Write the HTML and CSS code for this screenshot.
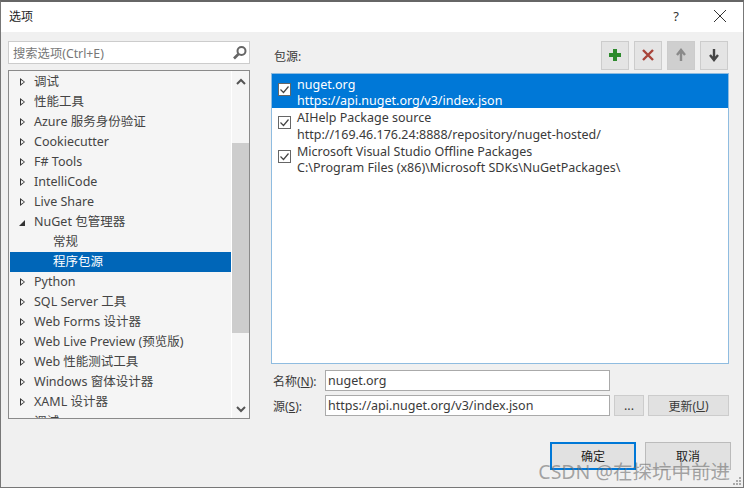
FILE: index.html
```html
<!DOCTYPE html>
<html lang="zh-CN">
<head>
    <meta charset="UTF-8">
    <title>选项</title>
    <link rel="stylesheet" href="styles.css">
</head>
<body>
    <div class="dialog">
        <header class="titlebar">
            <span class="title">选项</span>
            <span class="help">?</span>
            <svg class="close" width="14" height="14" viewBox="0 0 14 14"><path d="M1 1 13 13M13 1 1 13" stroke="#333" stroke-width="1" fill="none"/></svg>
        </header>

        <div class="content">
            <div class="left">
                <div class="search">
                    <span class="search-text">搜索选项(Ctrl+E)</span>
                    <svg width="16" height="16" viewBox="0 0 16 16"><circle cx="9.5" cy="6" r="4" fill="none" stroke="#666" stroke-width="2"/><path d="M6.5 9 2 13.5" stroke="#666" stroke-width="2.6"/></svg>
                </div>
                <div class="tree">
                    <div class="tree-items">
                        <div class="node"><i class="arrow"></i>调试</div>
                        <div class="node"><i class="arrow"></i>性能工具</div>
                        <div class="node"><i class="arrow"></i>Azure 服务身份验证</div>
                        <div class="node"><i class="arrow"></i>Cookiecutter</div>
                        <div class="node"><i class="arrow"></i>F# Tools</div>
                        <div class="node"><i class="arrow"></i>IntelliCode</div>
                        <div class="node"><i class="arrow"></i>Live Share</div>
                        <div class="node"><i class="arrow open"></i>NuGet 包管理器</div>
                        <div class="node child">常规</div>
                        <div class="node child selected">程序包源</div>
                        <div class="node"><i class="arrow"></i>Python</div>
                        <div class="node"><i class="arrow"></i>SQL Server 工具</div>
                        <div class="node"><i class="arrow"></i>Web Forms 设计器</div>
                        <div class="node"><i class="arrow"></i>Web Live Preview (预览版)</div>
                        <div class="node"><i class="arrow"></i>Web 性能测试工具</div>
                        <div class="node"><i class="arrow"></i>Windows 窗体设计器</div>
                        <div class="node"><i class="arrow"></i>XAML 设计器</div>
                        <div class="node"><i class="arrow"></i>调试</div>
                    </div>
                    <div class="scrollbar">
                        <svg width="10" height="8" viewBox="0 0 10 8"><path d="M1 6 5 2 9 6" fill="none" stroke="#555" stroke-width="2"/></svg>
                        <div class="track"><div class="thumb"></div></div>
                        <svg width="10" height="8" viewBox="0 0 10 8"><path d="M1 2 5 6 9 2" fill="none" stroke="#555" stroke-width="2"/></svg>
                    </div>
                </div>
            </div>

            <div class="right">
                <div class="top-row">
                    <span class="sources-label">包源:</span>
                    <div class="tools">
                        <div class="tool"><svg width="14" height="14" viewBox="0 0 14 14"><path d="M7 1V13M1 7H13" stroke="#2d8a2d" stroke-width="4"/></svg></div>
                        <div class="tool"><svg width="14" height="14" viewBox="0 0 14 14"><path d="M2 2 12 12M12 2 2 12" stroke="#a8443a" stroke-width="2.4"/></svg></div>
                        <div class="tool off"><svg width="12" height="14" viewBox="0 0 12 14"><path d="M6 13V3M2 7 6 2 10 7" fill="none" stroke="#8a8a8a" stroke-width="2.4"/></svg></div>
                        <div class="tool"><svg width="12" height="14" viewBox="0 0 12 14"><path d="M6 1V11M2 7 6 12 10 7" fill="none" stroke="#444" stroke-width="2.4"/></svg></div>
                    </div>
                </div>
                <div class="sources">
                    <div class="source active">
                        <span class="check"><svg width="11" height="11" viewBox="0 0 11 11"><path d="M1.5 5.5 4.5 8.5 9.5 2.5" fill="none" stroke="#444" stroke-width="1.2"/></svg></span>
                        <div class="source-text">nuget.org<br>https://api.nuget.org/v3/index.json</div>
                    </div>
                    <div class="source">
                        <span class="check"><svg width="11" height="11" viewBox="0 0 11 11"><path d="M1.5 5.5 4.5 8.5 9.5 2.5" fill="none" stroke="#444" stroke-width="1.2"/></svg></span>
                        <div class="source-text">AIHelp Package source<br>http://169.46.176.24:8888/repository/nuget-hosted/</div>
                    </div>
                    <div class="source">
                        <span class="check"><svg width="11" height="11" viewBox="0 0 11 11"><path d="M1.5 5.5 4.5 8.5 9.5 2.5" fill="none" stroke="#444" stroke-width="1.2"/></svg></span>
                        <div class="source-text">Microsoft Visual Studio Offline Packages<br>C:\Program Files (x86)\Microsoft SDKs\NuGetPackages\</div>
                    </div>
                </div>
                <div class="form-row name-row">
                    <label>名称(<u>N</u>):</label>
                    <div class="field">nuget.org</div>
                </div>
                <div class="form-row">
                    <label>源(<u>S</u>):</label>
                    <div class="field">https://api.nuget.org/v3/index.json</div>
                    <div class="btn browse">...</div>
                    <div class="btn update">更新(<u>U</u>)</div>
                </div>
            </div>
        </div>

        <footer class="actions">
            <div class="btn action primary">确定</div>
            <div class="btn action">取消</div>
        </footer>
        <span class="watermark">CSDN @在探坑中前进</span>
        <svg class="grip" width="9" height="9" viewBox="0 0 9 9" fill="#aaa"><rect x="6" y="0" width="2" height="2"/><rect x="3" y="3" width="2" height="2"/><rect x="6" y="3" width="2" height="2"/><rect x="0" y="6" width="2" height="2"/><rect x="3" y="6" width="2" height="2"/><rect x="6" y="6" width="2" height="2"/></svg>
    </div>
</body>
</html>
```

FILE: styles.css
```css
html, body {
    margin: 0;
    padding: 0;
}

body {
    width: 744px;
    height: 489px;
    overflow: hidden;
    font-family: "Noto Sans", "Noto Sans CJK SC", sans-serif;
    font-size: 12.5px;
    color: #3a3a3a;
}

.dialog {
    position: relative;
    box-sizing: border-box;
    width: 744px;
    height: 488px;
    border: 1px solid #777;
    border-top: 2px solid #666;
    background-color: #f0f0f0;
    display: flex;
    flex-direction: column;
}

.titlebar {
    box-sizing: border-box;
    height: 30px;
    flex: none;
    background-color: #fff;
    display: flex;
    align-items: center;
    padding: 0 16px 2px 8px;
}

.title {
    flex: 1;
    font-size: 12px;
    color: #222;
}

.help {
    font-size: 13px;
    margin-right: 34px;
    color: #333;
}

.content {
    flex: none;
    height: 386px;
    display: flex;
    padding: 9px 14px 0 7px;
    gap: 21px;
}

.left {
    width: 242px;
    flex: none;
}

.search {
    box-sizing: border-box;
    height: 23px;
    background-color: #fff;
    border: 1px solid #ccc;
    display: flex;
    align-items: center;
    justify-content: space-between;
    padding: 0 1px 0 4px;
    color: #777;
    font-size: 12.3px;
}

.tree {
    box-sizing: border-box;
    height: 349px;
    margin-top: 6px;
    border: 1px solid #8a8a8a;
    background-color: #f5f5f5;
    display: flex;
    overflow: hidden;
    padding-left: 1px;
}

.tree-items {
    width: 221px;
    flex: none;
    padding-top: 1px;
}

.node {
    height: 20px;
    line-height: 20px;
    white-space: nowrap;
    padding-left: 24px;
    position: relative;
    font-size: 12.5px;
    color: #444;
}

.node.child {
    padding-left: 43px;
}

.node.selected {
    background-color: #0066b8;
    color: #fff;
}

.arrow {
    position: absolute;
    left: 10px;
    top: 6px;
    width: 0;
    height: 0;
    border-left: 5px solid #333;
    border-top: 4px solid transparent;
    border-bottom: 4px solid transparent;
}

.arrow::after {
    content: "";
    position: absolute;
    left: -4px;
    top: -2px;
    border-left: 3px solid #f5f5f5;
    border-top: 2px solid transparent;
    border-bottom: 2px solid transparent;
}

.arrow.open {
    left: 9px;
    top: 8px;
    border: none;
    border-right: 6px solid #333;
    border-top: 6px solid transparent;
}

.arrow.open::after {
    display: none;
}

.scrollbar {
    flex: 1;
    display: flex;
    flex-direction: column;
    align-items: center;
    justify-content: space-between;
    padding: 7px 0 5px;
    border-left: 1px solid #fff;
}

.track {
    flex: 1;
    width: 100%;
    padding-top: 57px;
    padding-bottom: 72px;
    box-sizing: border-box;
    display: flex;
}

.thumb {
    flex: 1;
    background-color: #cdcdcd;
}

.right {
    flex: 1;
    min-width: 0;
}

.top-row {
    height: 32px;
    display: flex;
    align-items: center;
    justify-content: space-between;
}

.sources-label {
    margin-left: 3px;
    font-size: 12px;
    margin-top: -3px;
}

.tools {
    display: flex;
    gap: 5px;
    margin: -4px 1px 0 0;
}

.tool {
    box-sizing: border-box;
    width: 28px;
    height: 29px;
    border: 1px solid #ccc;
    background-color: #e4e4e4;
    display: flex;
    align-items: center;
    justify-content: center;
}

.tool.off {
    background-color: #cfcfcf;
}

.sources {
    box-sizing: border-box;
    height: 291px;
    border: 1px solid #8fbce0;
    background-color: #fff;
}

.source {
    display: flex;
    align-items: center;
    height: 33.5px;
    padding-left: 6px;
    gap: 6px;
}

.source.active {
    height: 34px;
    background-color: #0078d7;
    color: #fff;
}

.source-text {
    line-height: 16.5px;
    font-size: 12.5px;
    white-space: nowrap;
    padding-top: 4px;
}

.check {
    box-sizing: border-box;
    width: 13px;
    height: 13px;
    margin-bottom: 4px;
    border: 1px solid #666;
    background-color: #fff;
    display: flex;
    align-items: center;
    justify-content: center;
    flex: none;
}

.form-row {
    display: flex;
    align-items: center;
    height: 21px;
    margin-top: 4px;
    font-size: 12.5px;
}

.name-row {
    margin-top: 6px;
}

.form-row label {
    width: 54px;
    flex: none;
    padding-left: 2px;
    box-sizing: border-box;
    font-size: 12px;
}

.field {
    box-sizing: border-box;
    width: 285px;
    height: 21px;
    line-height: 19px;
    border: 1px solid #aaa;
    background-color: #fff;
    padding-left: 2px;
    flex: none;
}

.btn {
    box-sizing: border-box;
    border: 1px solid #ccc;
    background-color: #e1e1e1;
    display: flex;
    align-items: center;
    justify-content: center;
}

.browse {
    width: 30px;
    height: 21px;
    margin-left: 4px;
}

.update {
    width: 81px;
    height: 21px;
    margin-left: 4px;
    font-size: 12px;
}

.actions {
    display: flex;
    justify-content: flex-end;
    gap: 9px;
    padding: 15px 12px 0 0;
}

.action {
    width: 86px;
    height: 28px;
    font-size: 12px;
    color: #222;
    border-color: #bbb;
}

.action.primary {
    border: 2px solid #0078d7;
}

.watermark {
    position: absolute;
    right: 13px;
    bottom: 2px;
    font-size: 19.5px;
    color: rgba(110, 110, 110, 0.6);
    white-space: nowrap;
}

.grip {
    position: absolute;
    right: 1px;
    bottom: 1px;
}
```
